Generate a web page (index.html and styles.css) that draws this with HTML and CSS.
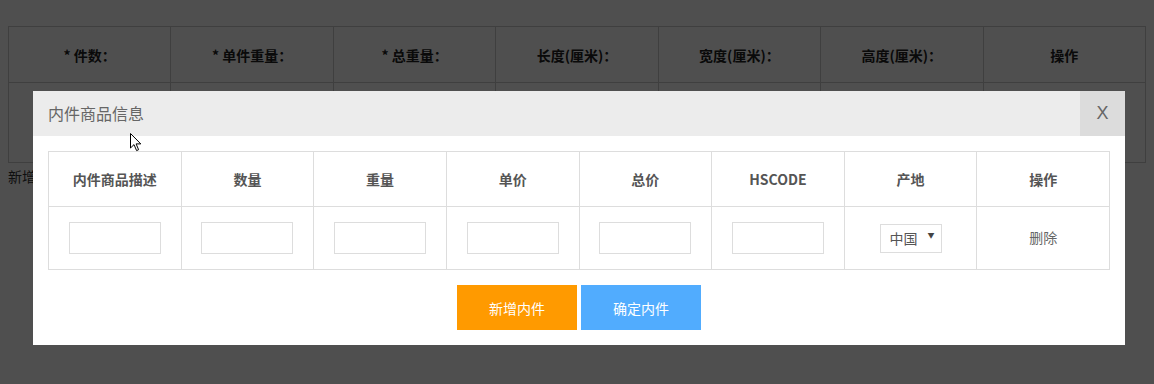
FILE: index.html
```html
<!DOCTYPE html>
<html lang="zh-CN">
<head>
  <meta charset="UTF-8" />
  <title>内件商品信息</title>
  <link rel="stylesheet" href="styles.css">
</head>
<body>
  <div class="page">
    <table class="pkg-table">
      <tr>
        <th>* 件数：</th>
        <th>* 单件重量：</th>
        <th>* 总重量：</th>
        <th>长度(厘米)：</th>
        <th>宽度(厘米)：</th>
        <th>高度(厘米)：</th>
        <th>操作</th>
      </tr>
      <tr class="pkg-row">
        <td></td><td></td><td></td><td></td><td></td><td></td><td></td>
      </tr>
    </table>
    <div class="add-link">新增</div>
  </div>

  <div class="mask"></div>

  <div class="modal">
    <div class="modal-head">
      <span class="modal-title">内件商品信息</span>
      <span class="modal-close">X</span>
    </div>
    <div class="modal-body">
      <table class="goods-table">
        <tr>
          <th>内件商品描述</th>
          <th>数量</th>
          <th>重量</th>
          <th>单价</th>
          <th>总价</th>
          <th>HSCODE</th>
          <th>产地</th>
          <th>操作</th>
        </tr>
        <tr>
          <td><input type="text" class="cell-input"></td>
          <td><input type="text" class="cell-input"></td>
          <td><input type="text" class="cell-input"></td>
          <td><input type="text" class="cell-input"></td>
          <td><input type="text" class="cell-input"></td>
          <td><input type="text" class="cell-input"></td>
          <td>
            <span class="fake-select">中国<span class="arrow">▼</span></span>
          </td>
          <td><span class="del">删除</span></td>
        </tr>
      </table>
      <div class="btns">
        <button class="btn btn-add">新增内件</button><button class="btn btn-ok">确定内件</button>
      </div>
    </div>
  </div>

  <!-- mouse pointer captured in the screenshot -->
  <svg class="cursor" width="12" height="19" viewBox="0 0 12 19">
    <path d="M0.5 0.5 L0.5 15 L4 11.6 L6.6 17.6 L8.6 16.7 L6.1 10.9 L10.8 10.9 Z" fill="#fff" stroke="#000" stroke-width="1"/>
  </svg>
</body>
</html>
```

FILE: styles.css
```css
body {
  margin: 0;
  font-family: "Noto Sans CJK SC", "Noto Sans", "Liberation Sans", sans-serif;
  background: #fff;
  color: #333;
}
.page {
  padding: 26px 8px 0 8px;
}
.pkg-table {
  width: 100%;
  border-collapse: collapse;
  table-layout: fixed;
}
.pkg-table th,
.pkg-table td {
  border: 1px solid #ccc;
  font-size: 14px;
  color: #222;
}
.pkg-table th {
  height: 53px;
}
.pkg-row td {
  height: 77px;
}
.add-link {
  font-size: 14px;
  margin-top: 3px;
  color: #333;
}
.mask {
  position: fixed;
  left: 0;
  top: 0;
  right: 0;
  bottom: 0;
  background: rgba(0, 0, 0, 0.69);
}
.modal {
  position: fixed;
  left: 33px;
  top: 91px;
  width: 1092px;
  background: #fff;
}
.modal-head {
  display: flex;
  height: 45px;
  background: #ececec;
}
.modal-title {
  flex: 1;
  padding-left: 15px;
  line-height: 45px;
  font-size: 16px;
  color: #666;
}
.modal-close {
  width: 45px;
  line-height: 45px;
  text-align: center;
  background: #dcdcdc;
  color: #666;
  font-size: 18px;
  font-family: "Liberation Sans", sans-serif;
}
.modal-body {
  padding: 15px;
}
.goods-table {
  width: 100%;
  border-collapse: collapse;
  table-layout: fixed;
}
.goods-table th,
.goods-table td {
  border: 1px solid #ddd;
  text-align: center;
  padding: 0;
}
.goods-table th {
  height: 54px;
  font-size: 14px;
  color: #555;
  font-weight: bold;
}
.goods-table td {
  height: 62px;
}
.cell-input {
  box-sizing: border-box;
  width: 92px;
  height: 32px;
  border: 1px solid #ddd;
  outline: none;
  vertical-align: middle;
}
.fake-select {
  position: relative;
  display: inline-block;
  box-sizing: border-box;
  width: 62px;
  height: 29px;
  line-height: 27px;
  padding-left: 9px;
  text-align: left;
  border: 1px solid #ddd;
  font-size: 14px;
  color: #555;
  vertical-align: middle;
}
.fake-select .arrow {
  position: absolute;
  right: 6px;
  top: -3px;
  font-size: 7px;
  color: #444;
}
.del {
  display: inline-block;
  font-size: 14px;
  line-height: 20px;
  padding-bottom: 5px;
  color: #666;
  vertical-align: middle;
}
.btns {
  text-align: center;
  padding-top: 15px;
}
.btn {
  width: 120px;
  height: 45px;
  border: none;
  color: #fff;
  font-size: 14px;
  font-family: inherit;
  cursor: pointer;
  margin: 0 2px;
  vertical-align: top;
}
.btn-add {
  background: #ff9a00;
}
.btn-ok {
  background: #51acfe;
}
.cursor {
  position: fixed;
  left: 130px;
  top: 133px;
}
```
